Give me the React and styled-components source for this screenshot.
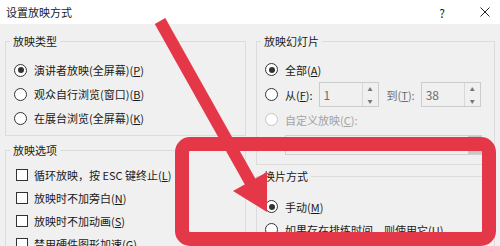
import React from "react";
import styled, { createGlobalStyle } from "styled-components";

const GlobalStyle = createGlobalStyle`
  html, body {
    margin: 0;
    padding: 0;
    background: #f0f0f0;
  }
  body {
    font-family: "Noto Sans CJK SC", "Noto Sans", sans-serif;
    font-size: 11px;
    color: #1a1a1a;
  }
`;

const Window = styled.div`
  position: relative;
  width: 500px;
  height: 246px;
  overflow: hidden;
  background: #f0f0f0;
`;

const TitleBar = styled.div`
  height: 24px;
  display: flex;
  align-items: center;
  justify-content: space-between;
  padding: 0 10px 0 6px;
  background: #fff;
  box-sizing: border-box;
`;

const Title = styled.span`
  font-size: 11px;
  line-height: 16px;
`;

const TitleButtons = styled.div`
  display: flex;
  align-items: center;
  gap: 35px;
  font-size: 12px;
  color: #222;
`;

const Body = styled.div`
  display: grid;
  grid-template-columns: 241px 239px;
  column-gap: 10px;
  padding: 9px 0 0 5px;
  align-items: start;
`;

const Column = styled.div`
  display: flex;
  flex-direction: column;
`;

const Group = styled.fieldset`
  margin: ${(p) => p.$mt || 0}px 0 0 0;
  padding: 0 8px ${(p) => p.$pb || 0}px 8px;
  border: 1px solid #dcdcdc;
  min-width: 0;
  box-sizing: border-box;
`;

const Legend = styled.legend`
  padding: 0 3px;
  margin-left: -4px;
  line-height: 16px;
  font-size: 11px;
`;

const List = styled.div`
  display: flex;
  flex-direction: column;
  margin-top: ${(p) => p.$mt || 0}px;
`;

const Row = styled.div`
  display: flex;
  align-items: center;
  height: ${(p) => p.$h || 24}px;
  white-space: nowrap;
  color: ${(p) => (p.$disabled ? "#a3a3a3" : "#1a1a1a")};
`;

const Radio = styled.span`
  position: relative;
  width: 13px;
  height: 13px;
  box-sizing: border-box;
  border-radius: 50%;
  border: 1px solid ${(p) => (p.$disabled ? "#c6c6c6" : "#333")};
  background: #fff;
  margin-right: 7px;
  flex: none;
  &::after {
    content: "";
    display: ${(p) => (p.$checked ? "block" : "none")};
    position: absolute;
    left: 2.5px;
    top: 2.5px;
    width: 6px;
    height: 6px;
    border-radius: 50%;
    background: #333;
  }
`;

const Check = styled.span`
  width: 12px;
  height: 12px;
  box-sizing: border-box;
  border: 1px solid #333;
  background: #fff;
  margin: 0 6px 0 2px;
  flex: none;
`;

const Label = styled.span`
  color: ${(p) => (p.$muted ? "#6d6d6d" : "inherit")};
  margin-right: ${(p) => p.$mr || 0}px;
`;

const Spin = styled.div`
  display: flex;
  width: 60px;
  height: 25px;
  box-sizing: border-box;
  border: 1px solid #cccccc;
  background: #f0f0f0;
  margin-right: ${(p) => p.$mr || 0}px;
`;

const SpinValue = styled.span`
  flex: 1;
  padding-left: 4px;
  line-height: 23px;
  color: #6d6d6d;
  font-size: 12px;
`;

const SpinButtons = styled.div`
  width: 15px;
  display: flex;
  flex-direction: column;
  border-left: 1px solid #d8d8d8;
`;

const SpinArrow = styled.span`
  flex: 1;
  display: flex;
  align-items: center;
  justify-content: center;
  font-size: 5px;
  color: #777;
  line-height: 1;
`;

const ListBox = styled.div`
  display: flex;
  justify-content: flex-end;
  height: 20px;
  margin: 3px 4px 0 20px;
  border: 1px solid #d0d0d0;
  box-sizing: border-box;
  background: #f0f0f0;
`;

const ScrollThumb = styled.div`
  width: 13px;
  background: #c8c8c8;
`;

const Overlay = styled.svg`
  position: absolute;
  left: 0;
  top: 0;
  pointer-events: none;
`;

const RED = "#e43848";

export default function App() {
  return (
    <Window>
      <GlobalStyle />
      <TitleBar>
        <Title>设置放映方式</Title>
        <TitleButtons>
          <span>?</span>
          <svg width="10" height="10" viewBox="0 0 10 10">
            <path d="M0.5 0.5 L9.5 9.5 M9.5 0.5 L0.5 9.5" stroke="#222" strokeWidth="1" />
          </svg>
        </TitleButtons>
      </TitleBar>

      <Body>
        <Column>
          <Group $pb={5}>
            <Legend>放映类型</Legend>
            <List $mt={9}>
              <Row>
                <Radio $checked />
                演讲者放映(全屏幕)(<u>P</u>)
              </Row>
              <Row>
                <Radio />
                观众自行浏览(窗口)(<u>B</u>)
              </Row>
              <Row>
                <Radio />
                在展台浏览(全屏幕)(<u>K</u>)
              </Row>
            </List>
          </Group>

          <Group $mt={6} $pb={4}>
            <Legend>放映选项</Legend>
            <List $mt={5}>
              <Row $h={23}>
                <Check />
                循环放映，按 ESC 键终止(<u>L</u>)
              </Row>
              <Row $h={23}>
                <Check />
                放映时不加旁白(<u>N</u>)
              </Row>
              <Row $h={23}>
                <Check />
                放映时不加动画(<u>S</u>)
              </Row>
              <Row $h={23}>
                <Check />
                禁用硬件图形加速(<u>G</u>)
              </Row>
            </List>
          </Group>
        </Column>

        <Column>
          <Group $pb={9}>
            <Legend>放映幻灯片</Legend>
            <List $mt={8}>
              <Row $h={25}>
                <Radio $checked />
                全部(<u>A</u>)
              </Row>
              <Row $h={25}>
                <Radio />
                <Label $mr={6}>
                  从(<u>F</u>):
                </Label>
                <Spin $mr={8}>
                  <SpinValue>1</SpinValue>
                  <SpinButtons>
                    <SpinArrow>▲</SpinArrow>
                    <SpinArrow>▼</SpinArrow>
                  </SpinButtons>
                </Spin>
                <Label $muted $mr={6}>
                  到(<u>T</u>):
                </Label>
                <Spin>
                  <SpinValue>38</SpinValue>
                  <SpinButtons>
                    <SpinArrow>▲</SpinArrow>
                    <SpinArrow>▼</SpinArrow>
                  </SpinButtons>
                </Spin>
              </Row>
              <Row $h={25} $disabled>
                <Radio $disabled />
                自定义放映(<u>C</u>):
              </Row>
            </List>
            <ListBox>
              <ScrollThumb />
            </ListBox>
          </Group>

          <Group $mt={3} $pb={6}>
            <Legend>换片方式</Legend>
            <List $mt={11}>
              <Row $h={23}>
                <Radio $checked />
                手动(<u>M</u>)
              </Row>
              <Row $h={23}>
                <Radio />
                如果存在排练时间，则使用它(<u>U</u>)
              </Row>
            </List>
          </Group>
        </Column>
      </Body>

      {/* red annotation drawn over the dialog */}
      <Overlay width="500" height="246" viewBox="0 0 500 246">
        <rect x="182" y="144" width="307" height="95" rx="8" fill="none" stroke={RED} strokeWidth="14" />
        <line x1="160" y1="21" x2="252" y2="185" stroke={RED} strokeWidth="12" />
        <polygon points="267,212 233,191 267,172" fill={RED} />
      </Overlay>
    </Window>
  );
}
